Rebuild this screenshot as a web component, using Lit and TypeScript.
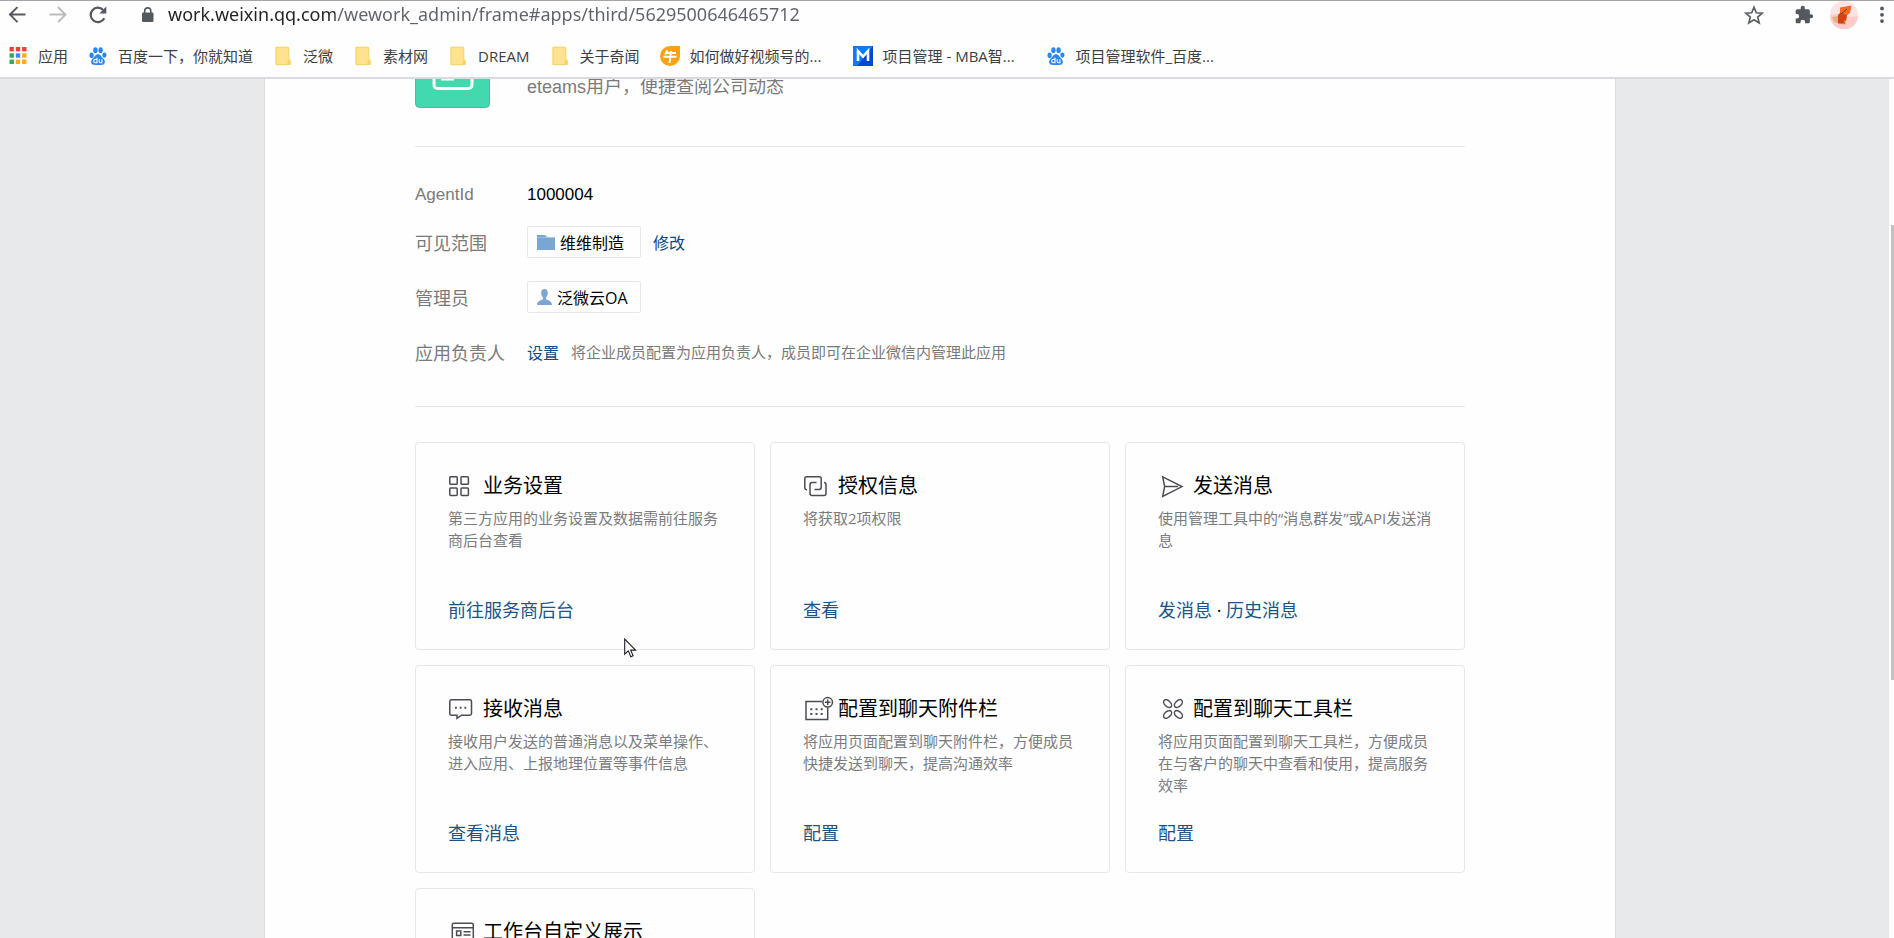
import { LitElement, html, css, svg, nothing, type TemplateResult } from "lit";
import { customElement, property } from "lit/decorators.js";
import { classMap } from "lit/directives/class-map.js";

type Bookmark = { label: string; icon: string; cut?: boolean };
type Action = { label: string };
type Card = { icon: string; title: string; desc: string; actions: Action[] };

const BOOKMARKS: Bookmark[] = [
  { label: "应用", icon: "apps" },
  { label: "百度一下，你就知道", icon: "paw" },
  { label: "泛微", icon: "folder" },
  { label: "素材网", icon: "folder" },
  { label: "DREAM", icon: "folder" },
  { label: "关于奇闻", icon: "folder" },
  { label: "如何做好视频号的...", icon: "niu", cut: true },
  { label: "项目管理 - MBA智...", icon: "mba", cut: true },
  { label: "项目管理软件_百度...", icon: "paw", cut: true },
];

const CARDS: Card[] = [
  { icon: "grid", title: "业务设置", desc: "第三方应用的业务设置及数据需前往服务商后台查看", actions: [{ label: "前往服务商后台" }] },
  { icon: "auth", title: "授权信息", desc: "将获取2项权限", actions: [{ label: "查看" }] },
  { icon: "send", title: "发送消息", desc: "使用管理工具中的“消息群发”或API发送消息", actions: [{ label: "发消息" }, { label: "历史消息" }] },
  { icon: "chat", title: "接收消息", desc: "接收用户发送的普通消息以及菜单操作、进入应用、上报地理位置等事件信息", actions: [{ label: "查看消息" }] },
  { icon: "attach", title: "配置到聊天附件栏", desc: "将应用页面配置到聊天附件栏，方便成员快捷发送到聊天，提高沟通效率", actions: [{ label: "配置" }] },
  { icon: "tools", title: "配置到聊天工具栏", desc: "将应用页面配置到聊天工具栏，方便成员在与客户的聊天中查看和使用，提高服务效率", actions: [{ label: "配置" }] },
  { icon: "bench", title: "工作台自定义展示", desc: "", actions: [] },
];

const APP_COLORS = ["#ea4335", "#ea4335", "#ea4335", "#34a853", "#4285f4", "#fbab18", "#34a853", "#fbab18", "#fbab18"];

const BOOKMARK_ICONS: Record<string, TemplateResult> = {
  apps: svg`${APP_COLORS.map((c, i) => svg`<rect x=${1.5 + (i % 3) * 6.3} y=${1 + Math.floor(i / 3) * 6.3} width="4.4" height="4.4" fill=${c}/>`)}`,
  paw: svg`<g fill="#2b87f5"><ellipse cx="3.6" cy="9.3" rx="2.1" ry="2.8"/><ellipse cx="7.4" cy="4.2" rx="2.2" ry="2.9"/><ellipse cx="12.6" cy="4.2" rx="2.2" ry="2.9"/><ellipse cx="16.4" cy="9.1" rx="2.1" ry="2.7"/><path d="M10 8.2c2.6 0 3.4 2.6 5 4.1 1.5 1.4 2.3 2.8 1.7 4.7-.7 2-2.900 2-6.700 2s-6 0-6.700-2c-.6-1.900.2-3.300 1.700-4.700 1.600-1.500 2.400-4.100 5-4.100z"/></g><g fill="none" stroke="#fff" stroke-width="1.1"><path d="M9 11.800v5H7.400a1.600 1.600 0 0 1 0-3.400H9M11.200 13.200v2.400q0 1.200 1.200 1.200h1.500v-3.600"/></g>`,
  folder: svg`<path d="M3 1h12q1 0 1 1v10.500l1.700 1.500v3.500q0 1.500-1.500 1.500H3q-.5 0-.5-.5V1.500q0-.5.5-.5z" fill="#ffe28f"/><path d="M3 1.200h12q.8 0 .8 1v11M3 1.200v17.500h12" fill="none" stroke="#f7d26a"/><path d="M14.500 19v-3.500q0-1.500 1.500-1.500t1.700 1.300v2.200q0 1.500-1.500 1.500z" fill="#f9d25f"/>`,
  niu: svg`<path d="M10 0h10v10A10 10 0 1 1 10 0z" fill="#fba30e"/><path d="M7.500 4.500L5 8.500M6 7h10M3.500 10.800h13M11 5l-1.500 12" fill="none" stroke="#fff" stroke-width="2"/>`,
  mba: svg`<rect width="20" height="20" fill="#0a7df5"/><path d="M20 0v20H4z" fill="#0547cf"/><path d="M5 15V5l5 5.500L15 5v10" fill="none" stroke="#fff" stroke-width="2.600"/>`,
};

const CARD_ICONS: Record<string, TemplateResult> = {
  grid: svg`<rect x="1.800" y="4.800" width="7.400" height="7.400" rx=".8"/><rect x="13" y="4.800" width="7.400" height="7.400" rx=".8"/><rect x="1.800" y="16" width="7.400" height="7.400" rx=".8"/><rect x="13" y="16" width="7.400" height="7.400" rx=".8"/>`,
  auth: svg`<path d="M4 17.800q-2.200 0-2.200-2.200V6.700q0-2 2-2h12.400q2 0 2 2v8.600q0 2.200-2.200 2.200H11.500"/><path d="M13.500 10.600H9q-2 0-2 2v8.800q0 2 2 2h12q2 0 2-2v-8.800q0-2.200-2-2.200"/>`,
  send: svg`<path d="M4.700 4.800L24 14.600 4.700 24.400l1.900-9.800zM6.600 14.600H20"/>`,
  chat: svg`<path d="M3.500 4.800h18.300q1.700 0 1.700 1.700v12q0 1.700-1.700 1.700h-8.300L9 23.300v-3.100H3.500q-1.700 0-1.700-1.700v-12q0-1.700 1.700-1.700z"/><path d="M7 12.700h1.800M11.700 12.700h1.800M16.400 12.700h1.800" stroke-width="1.900"/>`,
  attach: svg`<path d="M19 6.600H3v18h21.700V12.500"/><circle cx="24.700" cy="7.300" r="4.800"/><path d="M24.700 4.500v5.600M21.900 7.300h5.600"/><path d="M7.300 14.200h2M12.500 14.200h2M17.700 14.200h2M7.300 19h2M12.500 19h2M17.700 19h2" stroke-width="2"/>`,
  tools: svg`<ellipse cx="9.600" cy="8.600" rx="4.700" ry="2.900" transform="rotate(42 9.600 8.600)"/><ellipse cx="20.400" cy="8.600" rx="4.700" ry="2.900" transform="rotate(-42 20.400 8.600)"/><ellipse cx="9.600" cy="19.400" rx="4.700" ry="2.900" transform="rotate(-42 9.600 19.400)"/><ellipse cx="20.400" cy="19.400" rx="4.700" ry="2.900" transform="rotate(42 20.400 19.400)"/>`,
  bench: svg`<rect x="4.300" y="5.300" width="21" height="18" rx="1.500"/><path d="M4.300 9.800h21M15.500 13.700h7M15.500 17h7"/><rect x="8.600" y="13" width="4.200" height="4.500"/>`,
};

@customElement("browser-chrome")
export class BrowserChrome extends LitElement {
  static styles = css`
    :host {
      display: block;
      background: #fefefe;
      border-top: 1px solid #a5a5a5;
      border-bottom: 2px solid #dadbe0;
      font-family: "Open Sans", "Noto Sans CJK SC", sans-serif;
    }
    .toolbar {
      display: flex;
      align-items: center;
      height: 28px;
      padding: 0 8px;
    }
    button {
      display: flex;
      padding: 0;
      border: 0;
      background: none;
    }
    .nav {
      display: flex;
      gap: 20px;
    }
    .lock {
      margin: 0 10px 0 30px;
    }
    .url {
      flex: 1;
      min-width: 0;
      padding: 0 0 2px;
      border: 0;
      outline: 0;
      font-family: "Noto Sans", sans-serif;
      font-size: 18px;
      line-height: 24px;
      color: transparent;
      background: linear-gradient(to right, #202124 167px, #5f6368 167px);
      -webkit-background-clip: text;
      background-clip: text;
    }
    .tools {
      display: flex;
      align-items: center;
    }
    .star {
      margin-right: 30px;
    }
    .puzzle {
      margin-right: 16px;
    }
    .avatar {
      margin-right: 20px;
    }
    .marks {
      display: flex;
      align-items: center;
      gap: 20px;
      height: 43px;
      padding: 5px 8px 0;
      white-space: nowrap;
    }
    .mark {
      display: flex;
      align-items: center;
      gap: 10px;
      font-size: 15px;
      line-height: 20px;
      color: #3c4043;
      text-decoration: none;
    }
    .cut {
      width: 143px;
    }
  `;

  render() {
    return html`
      <div class="toolbar">
        <div class="nav">
          <button aria-label="后退"><svg width="20" height="20" viewBox="0 0 20 20" fill="none" stroke="#55595e" stroke-width="2"><path d="M17.500 9.600H2.500M9.500 2.100L2 9.600l7.500 7.500"/></svg></button>
          <button aria-label="前进"><svg width="20" height="20" viewBox="0 0 20 20" fill="none" stroke="#b9bbbe" stroke-width="2"><path d="M1.500 9.600H17M10 2.100l7.500 7.500-7.500 7.500"/></svg></button>
          <button aria-label="刷新"><svg width="20" height="20" viewBox="0 0 20 20"><path d="M16.300 13.200A7.200 7.200 0 1 1 15.200 5" fill="none" stroke="#55595e" stroke-width="2.200"/><path d="M18.300 1.500V8.500H11.300z" fill="#55595e"/></svg></button>
        </div>
        <svg class="lock" width="20" height="20" viewBox="0 0 20 20"><rect x="4" y="7.500" width="11.500" height="9.500" rx="1.200" fill="#55595e"/><path d="M6.700 8V5.900a3 3 0 0 1 6.100 0V8" fill="none" stroke="#55595e" stroke-width="1.600"/></svg>
        <input class="url" aria-label="地址栏" spellcheck="false" value="work.weixin.qq.com/wework_admin/frame#apps/third/5629500646465712" />
        <div class="tools">
          <button class="star" aria-label="收藏"><svg width="20" height="20" viewBox="0 0 20 20"><path d="M10 2.200l2.300 5.600 6 .4-4.600 3.900 1.500 5.900-5.200-3.200L4.800 18l1.500-5.900-4.600-3.900 6-.4z" fill="none" stroke="#5b5f64" stroke-width="1.700"/></svg></button>
          <button class="puzzle" aria-label="扩展程序"><svg width="20" height="20" viewBox="0 0 24 24"><path fill="#55595e" d="M20.500 11H19V7c0-1.100-.9-2-2-2h-4V3.500a2.500 2.500 0 0 0-5 0V5H4c-1.100 0-2 .9-2 2v3.800h1.500a2.700 2.700 0 0 1 0 5.400H2V20c0 1.100.9 2 2 2h3.800v-1.500a2.700 2.700 0 0 1 5.400 0V22H17c1.100 0 2-.9 2-2v-4h1.500a2.500 2.500 0 0 0 0-5z"/></svg></button>
          <button class="avatar" aria-label="用户"><svg width="28" height="28" viewBox="0 0 28 28"><circle cx="14" cy="14" r="14" fill="#fde3e4"/><path d="M0 14l10-2 11 4 7-1a14 14 0 0 1-28-1z" fill="#fdcbc9"/><path d="M2 16l6-1 8 6-1 3-11-3z" fill="#e9ac84"/><path d="M10 6.500L21.500 4.500 20 12l-4 3-6-3z" fill="#f26a26"/><path d="M8 14l2.500-2.500 6.500 3-1.500 8H8z" fill="#cf4315"/><path d="M11 13l6-5" stroke="#8e2d10"/><path d="M14 19.500l2.500.5-1 3z" fill="#f2bd6b"/></svg></button>
          <button aria-label="菜单"><svg width="8" height="20" viewBox="0 0 8 20" fill="#55595e"><circle cx="4" cy="3.500" r="1.900"/><circle cx="4" cy="9.800" r="1.900"/><circle cx="4" cy="16.100" r="1.900"/></svg></button>
        </div>
      </div>
      <nav class="marks">
        ${BOOKMARKS.map(
          (b) => html`<a class="mark" href="#"><svg width="20" height="20" viewBox="0 0 20 20">${BOOKMARK_ICONS[b.icon]}</svg><span class=${classMap({ cut: !!b.cut })}>${b.label}</span></a>`
        )}
      </nav>
    `;
  }
}

@customElement("feature-card")
export class FeatureCard extends LitElement {
  @property({ attribute: false }) card!: Card;

  static styles = css`
    :host {
      display: flex;
      flex-direction: column;
      box-sizing: border-box;
      min-height: 208px;
      padding: 29px 24px 27px 32px;
      border: 1px solid #e6e7e9;
      border-radius: 4px;
      font-family: "Open Sans", "Noto Sans CJK SC", sans-serif;
    }
    .title {
      display: flex;
      align-items: center;
      gap: 7px;
      margin: 0;
      font-size: 20px;
      line-height: 28px;
      font-weight: 400;
      color: #000;
    }
    .icon {
      flex: none;
      overflow: visible;
      fill: none;
      stroke: #4c4d53;
      stroke-width: 1.5px;
    }
    .desc {
      margin: 7px 0 0;
      font-size: 15px;
      line-height: 22px;
      color: #7b7c80;
    }
    .actions {
      margin-top: auto;
      font-size: 18px;
      line-height: 24px;
      color: #000;
    }
    a {
      color: #1a5488;
      text-decoration: none;
    }
  `;

  render() {
    const { icon, title, desc, actions } = this.card;
    return html`
      <h2 class="title"><svg class="icon" width="28" height="28" viewBox="0 0 28 28">${CARD_ICONS[icon]}</svg>${title}</h2>
      <p class="desc">${desc}</p>
      <div class="actions">${actions.map((a, i) => html`${i ? " · " : nothing}<a href="#">${a.label}</a>`)}</div>
    `;
  }
}

@customElement("app-root")
export class AppRoot extends LitElement {
  static styles = css`
    :host {
      display: flex;
      flex-direction: column;
      height: 100vh;
      overflow: hidden;
      background: #e8e9eb;
      font-family: "Liberation Sans", "Noto Sans CJK SC", sans-serif;
    }
    .view {
      flex: 1;
      min-height: 0;
      display: flex;
      overflow: hidden;
    }
    .page {
      flex: 1;
      padding-right: 9px;
    }
    .panel {
      box-sizing: border-box;
      max-width: 1352px;
      min-height: 100%;
      margin: 0 auto;
      padding: 0 24px;
      border: solid #d9dbe0;
      border-width: 0 1px;
      background: #fefefe;
    }
    .inner {
      max-width: 1050px;
      margin: 0 auto;
    }
    .head {
      display: flex;
      padding-bottom: 38px;
      border-bottom: 1px solid #e6e7e9;
    }
    .peek {
      display: flex;
      align-items: flex-end;
      gap: 37px;
      height: 29px;
      overflow: hidden;
    }
    .logo {
      flex: none;
    }
    .intro {
      margin: 0;
      padding-bottom: 13px;
      font-size: 18px;
      line-height: 16px;
      color: #7a7a7a;
    }
    .facts {
      margin: 0;
      padding: 29px 0 27px;
      border-bottom: 1px solid #e6e7e9;
    }
    .row {
      display: flex;
      align-items: center;
      height: 55px;
    }
    .row.slim {
      height: 38px;
      font-size: 17px;
    }
    dt {
      width: 112px;
      font-size: 18px;
      color: #7a7a7a;
    }
    .slim dt {
      font-size: 17px;
    }
    dd {
      display: flex;
      align-items: center;
      gap: 12px;
      margin: 0;
      color: #000;
    }
    .tag {
      display: flex;
      align-items: center;
      gap: 5px;
      box-sizing: border-box;
      min-width: 114px;
      height: 32px;
      padding: 0 9px;
      border: 1px solid #e6e7e9;
      border-radius: 2px;
      font-family: "Open Sans", "Noto Sans CJK SC", sans-serif;
      font-size: 16px;
    }
    .link {
      font-size: 16px;
      color: #0a4a86;
      text-decoration: none;
    }
    .hint {
      font-size: 15px;
      color: #7a7a7a;
    }
    .cards {
      display: grid;
      grid-template-columns: repeat(3, 1fr);
      gap: 15px;
      padding-top: 35px;
    }
    .track {
      flex: none;
      width: 5px;
      padding: 146px 0 258px 2px;
      box-sizing: border-box;
      background: #fefefe;
    }
    .thumb {
      height: 100%;
      background: #c1c1c1;
    }
    .cursor {
      position: absolute;
      left: 624px;
      top: 638px;
    }
  `;

  render() {
    return html`
      <browser-chrome></browser-chrome>
      <div class="view">
        <main class="page">
          <div class="panel">
            <div class="inner">
              <header class="head">
                <div class="peek">
                  <svg class="logo" width="75" height="75" viewBox="0 0 75 75"><rect x=".5" y=".5" width="74" height="74" rx="4" fill="#41d9ad" stroke="#3cc29c"/><g fill="none" stroke="#fff" stroke-width="3"><rect x="19" y="18" width="38" height="37.500" rx="3.500"/><path d="M26 30h18M26 38h18M26 46h13"/></g></svg>
                  <p class="intro">eteams用户，便捷查阅公司动态</p>
                </div>
              </header>
              <dl class="facts">
                <div class="row slim"><dt>AgentId</dt><dd>1000004</dd></div>
                <div class="row">
                  <dt>可见范围</dt>
                  <dd>
                    <span class="tag"><svg width="18" height="16" viewBox="0 0 18 16"><path d="M0 1h8l2 2.500H0z" fill="#7aa6d3"/><path d="M9 1h1l1.500 2H18v1H10z" fill="#d5e5f4"/><path d="M0 3.500h18V16H0z" fill="#7aa6d3"/></svg>维维制造</span>
                    <a class="link" href="#">修改</a>
                  </dd>
                </div>
                <div class="row">
                  <dt>管理员</dt>
                  <dd>
                    <span class="tag"><svg width="15" height="16" viewBox="0 0 15 16"><path d="M7.500 0c2.200 0 3.300 1.500 3.300 3.700 0 2-.7 3.600-1.700 4.600v2.200c2.500.8 5.900 1.800 5.900 5.500H0c0-3.700 3.400-4.700 5.900-5.500V8.300C4.900 7.300 4.200 5.700 4.200 3.700 4.200 1.500 5.300 0 7.500 0z" fill="#7aa6d3"/></svg>泛微云OA</span>
                  </dd>
                </div>
                <div class="row">
                  <dt>应用负责人</dt>
                  <dd><a class="link" href="#">设置</a><span class="hint">将企业成员配置为应用负责人，成员即可在企业微信内管理此应用</span></dd>
                </div>
              </dl>
              <section class="cards">${CARDS.map((c) => html`<feature-card .card=${c}></feature-card>`)}</section>
            </div>
          </div>
        </main>
        <div class="track"><div class="thumb"></div></div>
      </div>
      <svg class="cursor" width="14" height="20" viewBox="0 0 14 20"><path d="M.7 1v15.200l3.600-3.300 2.500 5.800 2.300-1-2.400-5.600h4.900z" fill="#fff" stroke="#1c1c2a" stroke-width="1.100"/></svg>
    `;
  }
}
